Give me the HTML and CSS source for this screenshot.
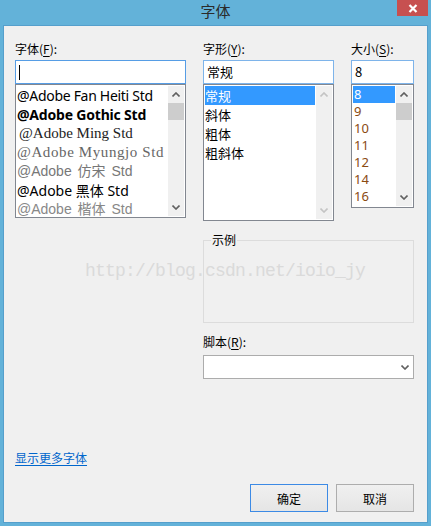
FILE: index.html
```html
<!DOCTYPE html>
<html lang="zh-CN">
<head>
    <meta charset="utf-8">
    <link rel="stylesheet" href="styles.css">
</head>
<body>
    <div class="window">
        <div class="titlebar">
            <span></span>
            <span class="title">字体</span>
            <span class="close">
                <svg width="10" height="9" viewBox="0 0 10 9"><path d="M1.5 1 L8.5 8 M8.5 1 L1.5 8" stroke="#fff" stroke-width="2.2"/></svg>
            </span>
        </div>

        <div class="client">
            <div class="main">
                <!-- font family column -->
                <div class="col font-col">
                    <label class="label">字体(<u>F</u>):</label>
                    <div class="input focused"><span class="caret"></span></div>
                    <div class="list font-list">
                        <div class="items">
                            <div class="item f1">@Adobe Fan Heiti Std</div>
                            <div class="item f2">@Adobe Gothic Std</div>
                            <div class="item f3">@Adobe Ming Std</div>
                            <div class="item f4">@Adobe Myungjo Std</div>
                            <div class="item f5">@Adobe 仿宋 Std</div>
                            <div class="item f6">@Adobe 黑体 Std</div>
                            <div class="item f7">@Adobe 楷体 Std</div>
                        </div>
                        <div class="scrollbar">
                            <span class="arrow"><svg width="8" height="5" viewBox="0 0 8 5"><path d="M0.5 4.5 L4 1 L7.5 4.5" fill="none" stroke="#606060" stroke-width="1.6"/></svg></span>
                            <span class="thumb"></span>
                            <span class="track"></span>
                            <span class="arrow"><svg width="8" height="5" viewBox="0 0 8 5"><path d="M0.5 0.5 L4 4 L7.5 0.5" fill="none" stroke="#606060" stroke-width="1.6"/></svg></span>
                        </div>
                    </div>
                </div>

                <div class="right">
                    <div class="top-row">
                        <!-- style column -->
                        <div class="col style-col">
                            <label class="label">字形(<u>Y</u>):</label>
                            <div class="input"><span class="value">常规</span></div>
                            <div class="list style-list">
                                <div class="items">
                                    <div class="item sel">常规</div>
                                    <div class="item">斜体</div>
                                    <div class="item">粗体</div>
                                    <div class="item">粗斜体</div>
                                </div>
                                <div class="scrollbar disabled">
                                    <span class="arrow"><svg width="8" height="5" viewBox="0 0 8 5"><path d="M0.5 4.5 L4 1 L7.5 4.5" fill="none" stroke="#c4c4c4" stroke-width="1.6"/></svg></span>
                                    <span class="track"></span>
                                    <span class="arrow"><svg width="8" height="5" viewBox="0 0 8 5"><path d="M0.5 0.5 L4 4 L7.5 0.5" fill="none" stroke="#c4c4c4" stroke-width="1.6"/></svg></span>
                                </div>
                            </div>
                        </div>

                        <!-- size column -->
                        <div class="col size-col">
                            <label class="label">大小(<u>S</u>):</label>
                            <div class="input"><span class="value">8</span></div>
                            <div class="list size-list">
                                <div class="items">
                                    <div class="item sel">8</div>
                                    <div class="item">9</div>
                                    <div class="item">10</div>
                                    <div class="item">11</div>
                                    <div class="item">12</div>
                                    <div class="item">14</div>
                                    <div class="item">16</div>
                                </div>
                                <div class="scrollbar">
                                    <span class="arrow"><svg width="8" height="5" viewBox="0 0 8 5"><path d="M0.5 4.5 L4 1 L7.5 4.5" fill="none" stroke="#606060" stroke-width="1.6"/></svg></span>
                                    <span class="thumb"></span>
                                    <span class="track"></span>
                                    <span class="arrow"><svg width="8" height="5" viewBox="0 0 8 5"><path d="M0.5 0.5 L4 4 L7.5 0.5" fill="none" stroke="#606060" stroke-width="1.6"/></svg></span>
                                </div>
                            </div>
                        </div>
                    </div>

                    <fieldset class="sample">
                        <legend>示例</legend>
                    </fieldset>

                    <label class="label script-label">脚本(<u>R</u>):</label>
                    <div class="select">
                        <svg width="8" height="5" viewBox="0 0 8 5"><path d="M0.5 0.5 L4 4 L7.5 0.5" fill="none" stroke="#606060" stroke-width="1.6"/></svg>
                    </div>
                </div>
            </div>

            <div class="footer">
                <a class="more-link" href="#">显示更多字体</a>
                <div class="buttons">
                    <button class="btn default">确定</button>
                    <button class="btn">取消</button>
                </div>
            </div>

            <!-- watermark over the dialog -->
            <div class="watermark">http://blog.csdn.net/ioio_jy</div>
        </div>
    </div>
</body>
</html>
```

FILE: styles.css
```css
* {
    margin: 0;
    padding: 0;
    box-sizing: border-box;
}
body {
    width: 431px;
    height: 526px;
    font-family: "Noto Sans CJK SC", "Noto Sans", sans-serif;
    font-size: 12px;
    color: #000;
    overflow: hidden;
}
.window {
    display: flex;
    flex-direction: column;
    height: 526px;
    background-color: #63b2d9;
    padding: 0 3px 3px 3px;
}
.titlebar {
    display: grid;
    grid-template-columns: 1fr auto 1fr;
    height: 25px;
}
.title {
    font-size: 15px;
    line-height: 22px;
    color: #2b2b2b;
}
.close {
    justify-self: end;
    display: flex;
    align-items: center;
    justify-content: center;
    width: 31px;
    height: 16px;
    background-color: #c75050;
}
.client {
    position: relative;
    flex: 1;
    display: flex;
    flex-direction: column;
    background-color: #f0f0f0;
    border: 1px solid #559fcc;
}
.main {
    display: flex;
    gap: 17px;
    padding: 15px 13px 0 11px;
}
.col {
    display: flex;
    flex-direction: column;
}
.label {
    display: block;
    line-height: 16px;
    margin-bottom: 3px;
}
.label u {
    text-decoration-thickness: 1px;
    text-underline-offset: 2px;
}
.input {
    height: 24px;
    background: #fff;
    border: 1px solid #7eb4ea;
    display: flex;
    align-items: center;
    padding-left: 3px;
}
.input.focused {
    border-color: #569de5;
}
.caret {
    width: 1px;
    height: 15px;
    background: #000;
}
.value {
    font-size: 13px;
    line-height: 16px;
}
.list {
    display: flex;
    background: #fff;
    border: 1px solid #828790;
    padding: 1px;
    overflow: hidden;
}
.items {
    flex: 1;
    overflow: hidden;
}
.item {
    white-space: nowrap;
    font-size: 13px;
    line-height: 19px;
    height: 19px;
}
.item.sel {
    background-color: #3399ff;
    color: #fff;
}
.scrollbar {
    width: 16px;
    display: flex;
    flex-direction: column;
    background-color: #f0f0f0;
}
.arrow {
    height: 17px;
    display: flex;
    align-items: center;
    justify-content: center;
}
.thumb {
    height: 17px;
    background-color: #cdcdcd;
}
.track {
    flex: 1;
}

/* font list */
.font-col {
    width: 172px;
}
.font-list {
    height: 134px;
}
.f1 { font-family: "Noto Sans", sans-serif; font-size: 14px; letter-spacing: -0.3px; }
.f2 { font-family: "Noto Sans", sans-serif; font-size: 14px; font-weight: bold; letter-spacing: -0.2px; }
.f3 { font-family: "Liberation Serif", serif; font-size: 15px; padding-left: 2px; color: #222; }
.f4 { font-family: "Liberation Serif", serif; font-size: 15px; letter-spacing: 0.6px; color: #666; }
.f5 { font-family: "Liberation Sans", "Noto Sans CJK SC", sans-serif; font-size: 14px; color: #777; word-spacing: 2px; }
.f6 { font-family: "Noto Sans", "Noto Sans CJK SC", sans-serif; font-size: 14px; color: #000; }
.f7 { font-family: "Liberation Sans", "Noto Sans CJK SC", sans-serif; font-size: 14px; color: #888; word-spacing: 2px; }

.right {
    width: 211px;
    display: flex;
    flex-direction: column;
}
.top-row {
    display: flex;
    gap: 17px;
}
.style-col {
    width: 131px;
}
.style-list {
    height: 137px;
}
.size-col {
    width: 63px;
}
.size-list {
    height: 124px;
}
.size-list .item {
    font-family: "Noto Sans", sans-serif;
    height: 17px;
    line-height: 17px;
    color: #8a4a12;
    padding-left: 1px;
}
.size-list .item.sel {
    color: #fff;
}
.size-list .items {
    padding-right: 1px;
}
.style-list .items {
    padding-right: 1px;
}

.sample {
    margin-top: 11px;
    height: 91px;
    border: 1px solid #dcdcdc;
    padding: 0;
}
.sample legend {
    margin-left: 7px;
    padding: 0 1px;
    line-height: 16px;
}
.script-label {
    margin-top: 11px;
    margin-bottom: 5px;
}
.select {
    height: 24px;
    background: #fff;
    border: 1px solid #acacac;
    display: flex;
    align-items: center;
    justify-content: flex-end;
    padding-right: 4px;
}

.footer {
    margin-top: auto;
    padding: 0 13px 10px 11px;
}
.more-link {
    display: block;
    width: max-content;
    line-height: 16px;
    color: #0066cc;
    text-decoration: underline;
    text-underline-offset: 2px;
}
.buttons {
    display: flex;
    justify-content: flex-end;
    gap: 8px;
    margin-top: 18px;
}
.btn {
    width: 78px;
    height: 28px;
    font-family: "Noto Sans CJK SC", sans-serif;
    font-size: 12px;
    color: #000;
    background: linear-gradient(#f0f0f0, #e5e5e5);
    border: 1px solid #adadad;
}
.btn.default {
    border-color: #3c8ae5;
}

.watermark {
    position: absolute;
    left: 81px;
    top: 235px;
    font-family: "Liberation Mono", monospace;
    font-size: 18px;
    letter-spacing: -0.8px;
    color: #dadada;
    pointer-events: none;
}
```
